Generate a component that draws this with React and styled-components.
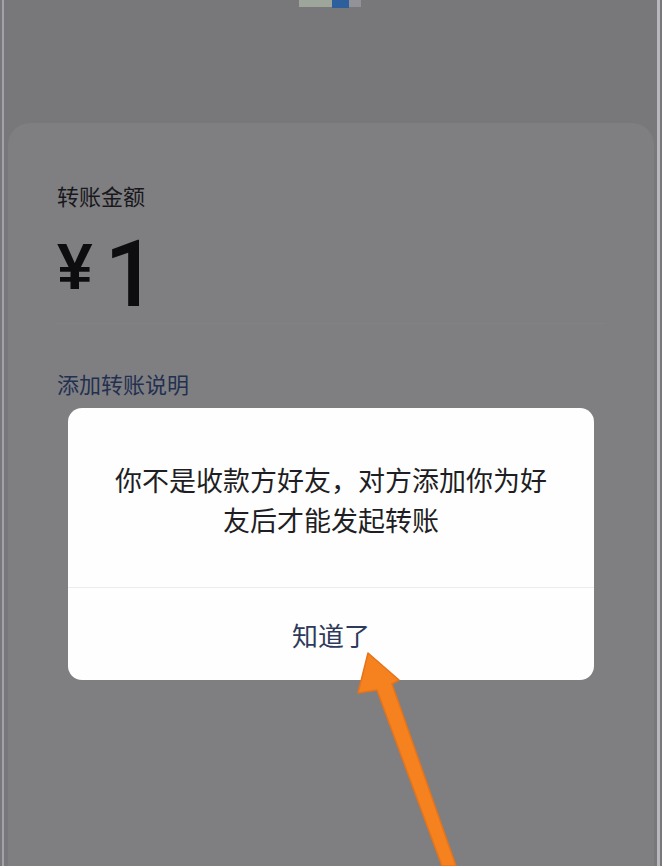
import React from "react";
import styled, { createGlobalStyle } from "styled-components";

const GlobalStyle = createGlobalStyle`
  html, body { margin: 0; padding: 0; background: #78787b; }
  body { font-family: "Noto Sans CJK SC", "Noto Sans", sans-serif; }
`;

const Frame = styled.div`
  position: relative;
  width: 662px;
  height: 866px;
  overflow: hidden;
  display: flex;
  flex-direction: column;
  background: linear-gradient(
    to right,
    #78787b 0 2px,
    #a3a1a9 2px 4px,
    #78787b 4px 657px,
    #b9b7bd 657px 660px,
    #78787b 660px
  );
`;

const Header = styled.div`
  height: 123px;
  flex: none;
  display: flex;
  justify-content: center;
`;

const Thumb = styled.svg`
  display: block;
  margin-left: -2px;
`;

const Card = styled.div`
  flex: 1;
  margin: 0 8px;
  border-radius: 22px 22px 0 0;
  background: #7f7f82;
  padding: 61px 49px 0;
  display: flex;
  flex-direction: column;
`;

const Label = styled.div`
  font-size: 22px;
  line-height: 22px;
  color: ${(p) => p.$color || "#18181c"};
  margin-top: ${(p) => p.$mt || 0}px;
`;

const AmountRow = styled.div`
  margin-top: 24px;
  display: flex;
  align-items: flex-start;
  gap: 12px;
  font-weight: 700;
  color: #0d0d10;
`;

const Currency = styled.span`
  font-family: "Liberation Sans", Arial, sans-serif;
  font-size: 64px;
  line-height: 64px;
  margin-top: 5px;
`;

const Amount = styled.span`
  font-family: Roboto, "Liberation Sans", sans-serif;
  font-weight: 500;
  font-size: 92px;
  line-height: 92px;
  margin-top: -1px;
`;

const Divider = styled.div`
  height: 1px;
  margin-top: 2px;
  background: #828285;
`;

const Dialog = styled.div`
  position: absolute;
  left: 68px;
  top: 408px;
  width: 526px;
  height: 272px;
  border-radius: 14px;
  background: #fefefe;
  display: flex;
  flex-direction: column;
  overflow: hidden;
`;

const DialogBody = styled.div`
  height: 180px;
  box-sizing: border-box;
  padding: 52px 40px 0;
  text-align: center;
  font-size: 27px;
  line-height: 40px;
  color: #1e1e24;
  border-bottom: 1px solid #ececef;
`;

const DialogButton = styled.div`
  flex: 1;
  display: flex;
  align-items: center;
  justify-content: center;
  font-size: 26px;
  color: #2e3a5a;
`;

const Arrow = styled.svg`
  position: absolute;
  left: 350px;
  top: 645px;
  pointer-events: none;
`;

export default function App() {
  return (
    <>
      <GlobalStyle />
      <Frame>
        <Header>
          <Thumb width="62" height="8" viewBox="0 0 62 8">
            <rect x="0" y="0" width="33" height="7" fill="#9ea69c" />
            <rect x="33" y="0" width="17" height="8" fill="#2c5f9c" />
            <rect x="50" y="0" width="12" height="7" fill="#929298" />
          </Thumb>
        </Header>
        <Card>
          <Label>转账金额</Label>
          <AmountRow>
            <Currency>¥</Currency>
            <Amount>1</Amount>
          </AmountRow>
          <Divider />
          <Label $mt={48} $color="#233050">添加转账说明</Label>
        </Card>
        <Dialog>
          <DialogBody>你不是收款方好友，对方添加你为好友后才能发起转账</DialogBody>
          <DialogButton>知道了</DialogButton>
        </Dialog>
        <Arrow width="115" height="221" viewBox="0 0 115 221">
          <polygon
            points="18,8 49,35 42,39 106,221 92,221 27,45 8,48"
            fill="#f5821f"
            stroke="#e87318"
            strokeWidth="1.5"
            strokeLinejoin="round"
          />
        </Arrow>
      </Frame>
    </>
  );
}
